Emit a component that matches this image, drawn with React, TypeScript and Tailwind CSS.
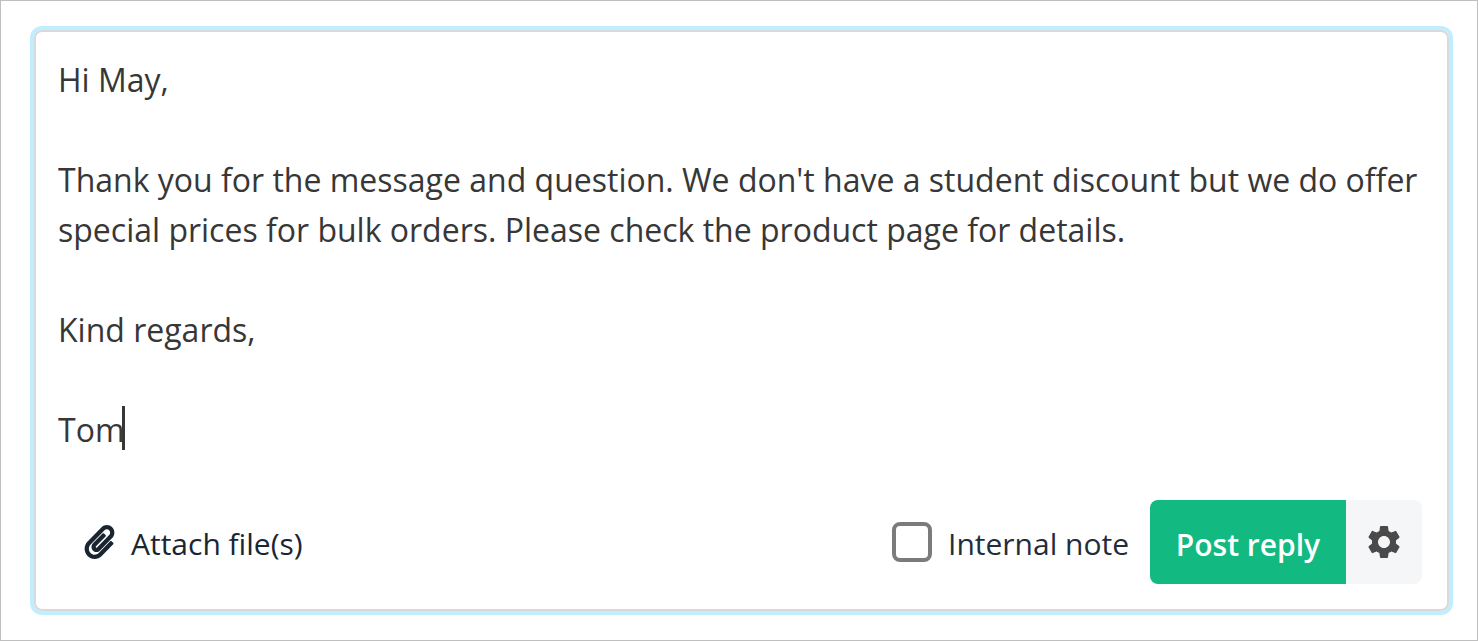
import React, { useState } from 'react';
import { FaPaperclip } from 'react-icons/fa';
import { MdSettings } from 'react-icons/md';

const draft = `Hi May,

Thank you for the message and question. We don't have a student discount but we do offer special prices for bulk orders. Please check the product page for details.

Kind regards,

Tom`;

export default function App() {
  const [message, setMessage] = useState(draft);
  const [internal, setInternal] = useState(false);

  return (
    <main className="min-h-screen border border-[#bfbfbf] bg-white pt-[29px] pr-7 pb-[29px] pl-[33px] font-['Open_Sans','Noto_Sans',sans-serif]">
      <form className="rounded-lg border-2 border-[#d9d9d9] ring-4 ring-[#bfeeff]" onSubmit={(e) => e.preventDefault()}>
        <div className="relative px-[22px] pt-[23px]">
          <textarea
            aria-label="Reply"
            rows={8}
            value={message}
            onChange={(e) => setMessage(e.target.value)}
            className="block w-full resize-none overflow-hidden bg-transparent text-[32px] leading-[50px] text-[#373737] outline-none"
          />
          <span className="absolute top-[374px] left-[86px] h-11 w-[3px] bg-[#373737]" />
        </div>
        <div className="flex items-center justify-between pt-[45px] pr-[25px] pb-[25px] pl-12">
          <button type="button" className="flex items-center gap-4 text-[30px] leading-10 text-[#1a2532]">
            <FaPaperclip className="h-[34px] w-[31px]" />
            <span className="pt-1">Attach file(s)</span>
          </button>
          <div className="flex items-center gap-[21px]">
            <label className="flex items-center gap-4 text-[30px] leading-10 text-[#1f2d3d]">
              <input
                type="checkbox"
                checked={internal}
                onChange={(e) => setInternal(e.target.checked)}
                className="size-10 appearance-none rounded-lg border-4 border-[#7b7b7b] bg-white checked:bg-[#12b981]"
              />
              <span className="pt-1">Internal note</span>
            </label>
            <div className="flex h-[84px] overflow-hidden rounded-lg">
              <button type="submit" className="w-[196px] bg-[#12b981] pt-1.5 text-[30px] leading-10 font-semibold text-white">
                Post reply
              </button>
              <button type="button" aria-label="Reply settings" className="flex w-[76px] items-center justify-center bg-[#f5f6f8] text-[#4a4a4a]">
                <MdSettings className="size-10" />
              </button>
            </div>
          </div>
        </div>
      </form>
    </main>
  );
}
